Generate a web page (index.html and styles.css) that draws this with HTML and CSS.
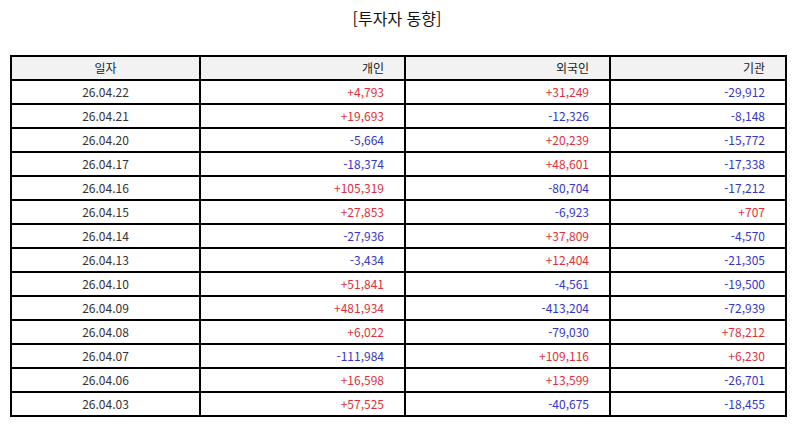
FILE: index.html
```html
<!DOCTYPE html>
<html lang="ko">
<head>
<meta charset="utf-8">
<title>투자자 동향</title>
<link rel="stylesheet" href="styles.css">
</head>
<body>
<h1 class="title">[투자자 동향]</h1>
<table class="grid">
  <colgroup>
    <col class="c-date">
    <col class="c-num">
    <col class="c-num">
    <col class="c-last">
  </colgroup>
  <thead>
    <tr><th class="center">일자</th><th>개인</th><th>외국인</th><th>기관</th></tr>
  </thead>
  <tbody>
    <tr><td class="center">26.04.22</td><td class="up">+4,793</td><td class="up">+31,249</td><td class="down">-29,912</td></tr>
    <tr><td class="center">26.04.21</td><td class="up">+19,693</td><td class="down">-12,326</td><td class="down">-8,148</td></tr>
    <tr><td class="center">26.04.20</td><td class="down">-5,664</td><td class="up">+20,239</td><td class="down">-15,772</td></tr>
    <tr><td class="center">26.04.17</td><td class="down">-18,374</td><td class="up">+48,601</td><td class="down">-17,338</td></tr>
    <tr><td class="center">26.04.16</td><td class="up">+105,319</td><td class="down">-80,704</td><td class="down">-17,212</td></tr>
    <tr><td class="center">26.04.15</td><td class="up">+27,853</td><td class="down">-6,923</td><td class="up">+707</td></tr>
    <tr><td class="center">26.04.14</td><td class="down">-27,936</td><td class="up">+37,809</td><td class="down">-4,570</td></tr>
    <tr><td class="center">26.04.13</td><td class="down">-3,434</td><td class="up">+12,404</td><td class="down">-21,305</td></tr>
    <tr><td class="center">26.04.10</td><td class="up">+51,841</td><td class="down">-4,561</td><td class="down">-19,500</td></tr>
    <tr><td class="center">26.04.09</td><td class="up">+481,934</td><td class="down">-413,204</td><td class="down">-72,939</td></tr>
    <tr><td class="center">26.04.08</td><td class="up">+6,022</td><td class="down">-79,030</td><td class="up">+78,212</td></tr>
    <tr><td class="center">26.04.07</td><td class="down">-111,984</td><td class="up">+109,116</td><td class="up">+6,230</td></tr>
    <tr><td class="center">26.04.06</td><td class="up">+16,598</td><td class="up">+13,599</td><td class="down">-26,701</td></tr>
    <tr><td class="center">26.04.03</td><td class="up">+57,525</td><td class="down">-40,675</td><td class="down">-18,455</td></tr>
  </tbody>
</table>
</body>
</html>
```
FILE: styles.css
```css
html, body {
  margin: 0;
  padding: 0;
  background: #ffffff;
}
body {
  font-family: "Noto Sans CJK KR", "Noto Sans", sans-serif;
  color: #333333;
}
.title {
  margin: 0;
  padding-top: 6px;
  height: 55px;
  box-sizing: border-box;
  text-align: center;
  font-size: 16px;
  font-weight: normal;
  line-height: 24px;
  color: #111111;
}
.grid {
  margin-left: 10px;
  width: 775px;
  border-collapse: collapse;
  table-layout: fixed;
  font-size: 12px;
}
.c-date { width: 189px; }
.c-num { width: 205px; }
.c-last { width: 176px; }
.grid th,
.grid td {
  border: 2px solid #000000;
  height: 22px;
  padding: 0 20px 0 0;
  text-align: right;
  font-weight: normal;
  line-height: 14px;
  white-space: nowrap;
}
.grid th {
  background: #f2f2f2;
  color: #222222;
}
.grid .center {
  text-align: center;
  padding: 0;
}
.grid .up { color: #e0303a; }
.grid .down { color: #3535c8; }
```
